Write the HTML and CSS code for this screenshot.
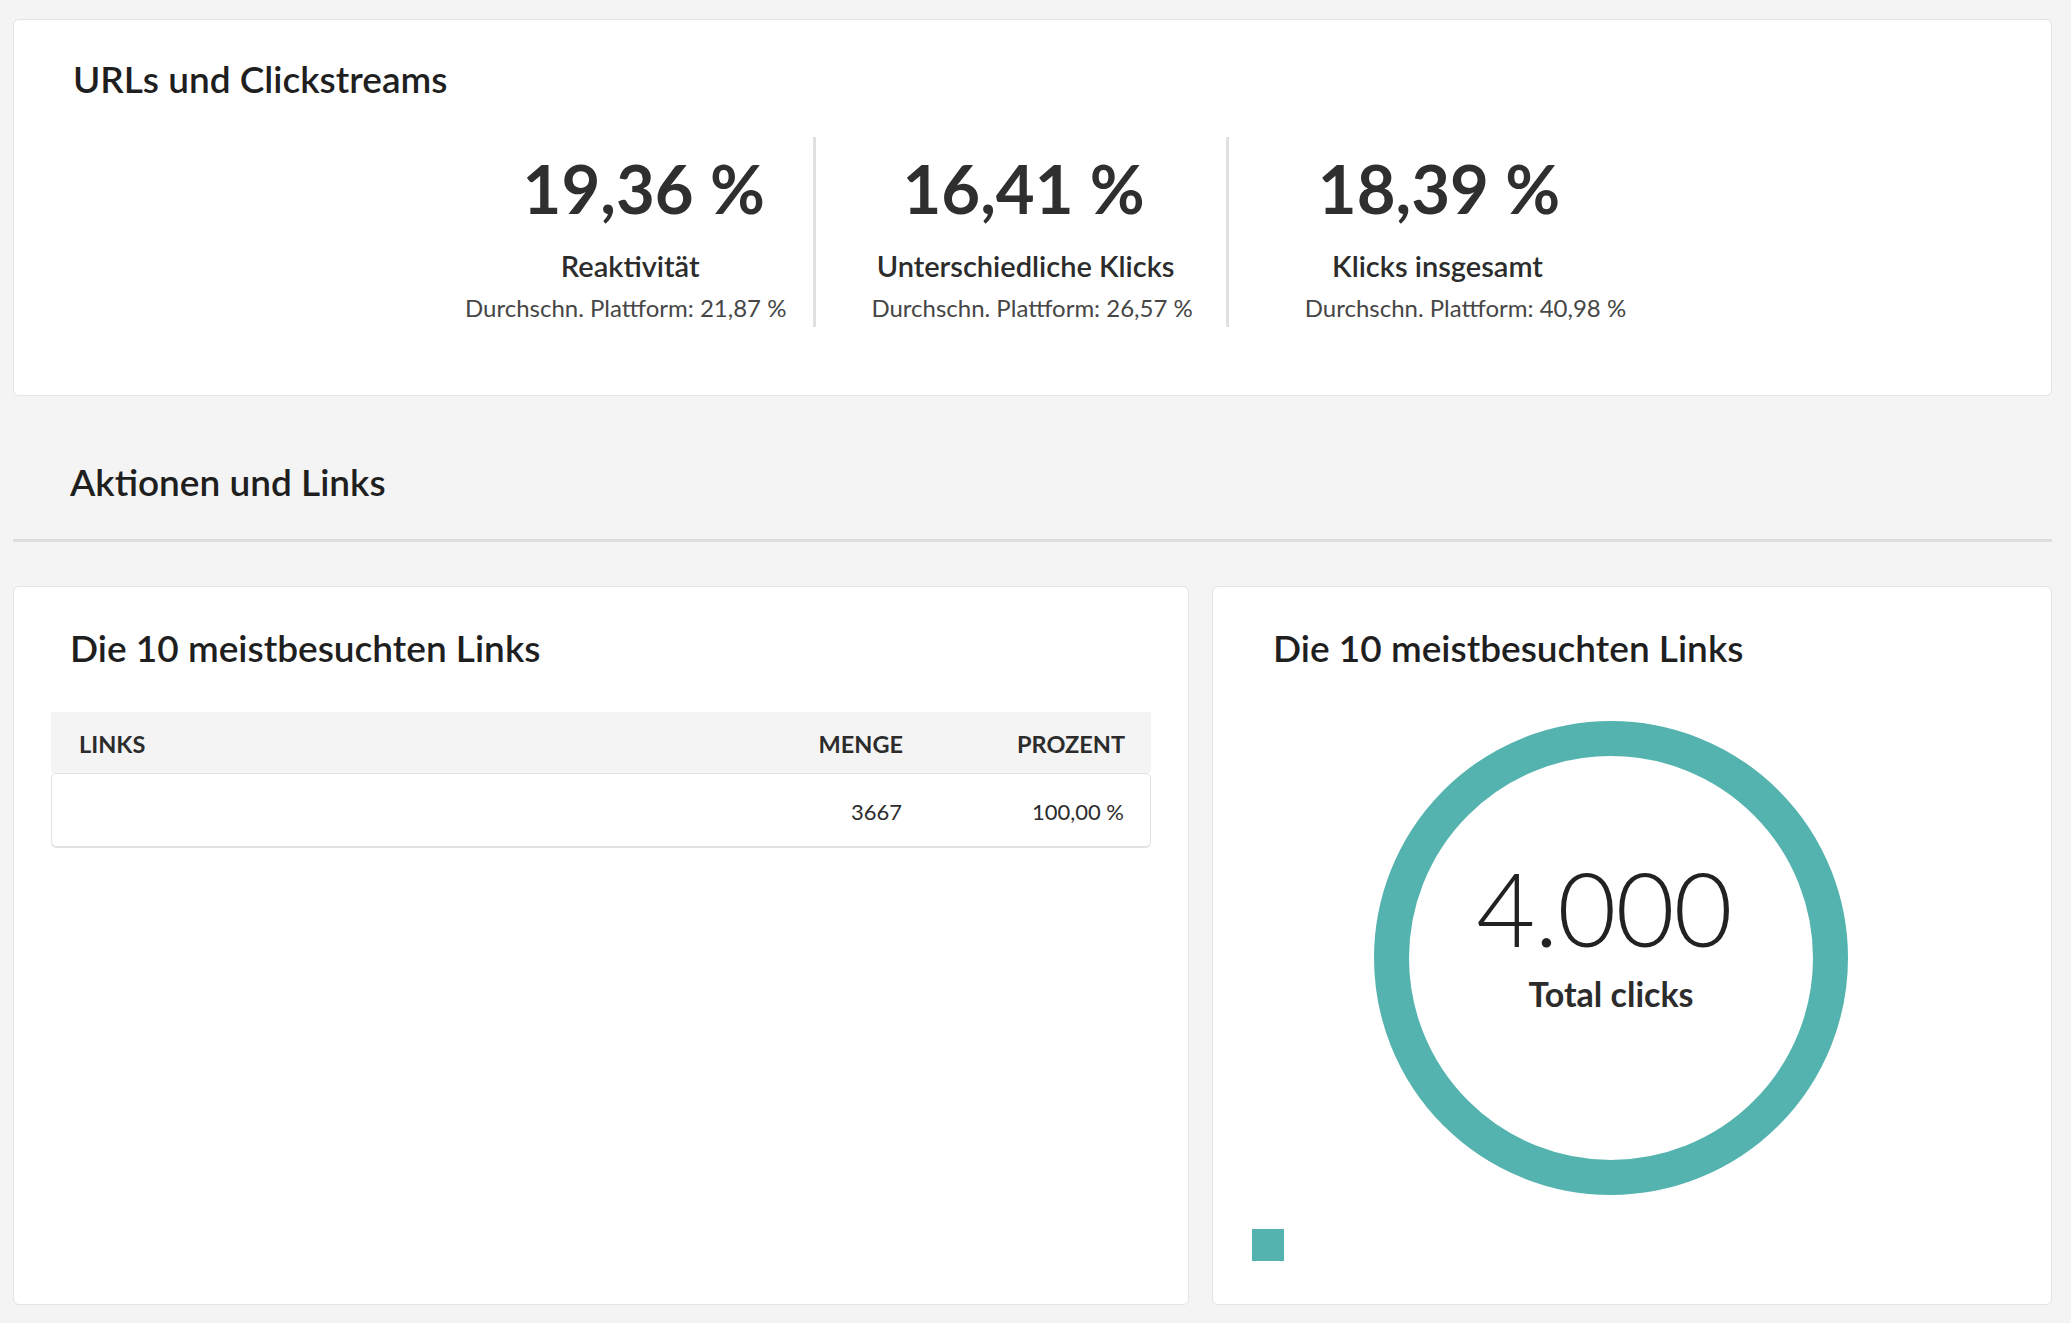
FILE: index.html
```html
<!DOCTYPE html>
<html lang="de">
<head>
<meta charset="utf-8">
<title>URLs und Clickstreams</title>
<link rel="stylesheet" href="styles.css">
</head>
<body>
<div class="page">
  <section class="card card-summary">
    <h2 class="card-title">URLs und Clickstreams</h2>
    <div class="metrics">
      <div class="metric metric-first">
        <div class="metric-value">19,36 %</div>
        <div class="metric-label">Reaktivität</div>
        <div class="metric-avg">Durchschn. Plattform: 21,87 %</div>
      </div>
      <div class="metric metric-middle">
        <div class="metric-value">16,41 %</div>
        <div class="metric-label">Unterschiedliche Klicks</div>
        <div class="metric-avg">Durchschn. Plattform: 26,57 %</div>
      </div>
      <div class="metric metric-last">
        <div class="metric-value">18,39 %</div>
        <div class="metric-label">Klicks insgesamt</div>
        <div class="metric-avg">Durchschn. Plattform: 40,98 %</div>
      </div>
    </div>
  </section>

  <h2 class="section-title">Aktionen und Links</h2>

  <div class="grid">
    <section class="card card-table">
      <h3 class="card-title title-left">Die 10 meistbesuchten Links</h3>
      <div class="table">
        <div class="thead">
          <div class="th">LINKS</div>
          <div class="th num">MENGE</div>
          <div class="th num">PROZENT</div>
        </div>
        <div class="trow">
          <div class="td"></div>
          <div class="td num">3667</div>
          <div class="td num">100,00 %</div>
        </div>
      </div>
    </section>

    <section class="card card-chart">
      <h3 class="card-title title-right">Die 10 meistbesuchten Links</h3>
      <div class="chart">
        <div class="donut">
          <div class="donut-value">4.000</div>
          <div class="donut-label">Total clicks</div>
        </div>
      </div>
      <div class="legend">
        <span class="legend-swatch"></span>
      </div>
    </section>
  </div>
</div>
</body>
</html>
```

FILE: styles.css
```css
* { box-sizing: border-box; }

body {
  margin: 0;
  background: #f4f4f4;
  font-family: Lato, "Noto Sans", sans-serif;
  color: #2c2c2c;
}

.page {
  padding: 19px 19px 18px 13px;
}

.card {
  background: #ffffff;
  border: 1px solid #e3e3e3;
  border-radius: 6px;
}

.card-title {
  margin: 0;
  font-size: 37px;
  line-height: 44px;
  font-weight: 600;
  color: #1f1f1f;
}

/* Summary card */
.card-summary {
  padding: 37px 37px 68px 59px;
}

.metrics {
  display: flex;
  justify-content: flex-start;
  margin-top: 36px;
  margin-left: -22px;
  padding-left: 374px;
}

.metric {
  padding: 11px 27px 4px 40px;
  text-align: center;
}

.metric + .metric {
  border-left: 3px solid #e0e0e0;
}

.metric-middle {
  padding-left: 55px;
  padding-right: 33px;
}

.metric-last {
  padding-left: 76px;
  padding-right: 0;
}

.metric-value {
  font-size: 67px;
  line-height: 80px;
  font-weight: 700;
  color: #2f2f2f;
  margin-bottom: 21px;
}

.metric-label {
  font-size: 29px;
  line-height: 34px;
  font-weight: 600;
  color: #2c2c2c;
  margin-bottom: 10px;
}

.metric-first .metric-value { margin-left: 36px; }
.metric-first .metric-label { margin-left: 9px; }
.metric-middle .metric-value { margin-right: 17px; }
.metric-middle .metric-label { margin-right: 13px; }
.metric-last .metric-value { margin-right: 53px; }
.metric-last .metric-label { margin-right: 56px; }

.metric-avg {
  font-size: 24px;
  line-height: 30px;
  color: #464646;
  white-space: nowrap;
}

/* Section heading */
.section-title {
  margin: 64px 0 0;
  padding: 0 0 35px 57px;
  font-size: 37px;
  line-height: 44px;
  font-weight: 600;
  color: #1f1f1f;
  border-bottom: 3px solid #dedede;
}

/* Lower grid */
.grid {
  display: grid;
  grid-template-columns: 7fr 5fr;
  gap: 23px;
  margin-top: 44px;
}

.card-table {
  padding: 39px 37px 37px;
}

.title-left {
  margin-left: 19px;
}

.table {
  margin-top: 42px;
}

.thead,
.trow {
  display: grid;
  grid-template-columns: 1fr 150px 222px;
  align-items: center;
  padding: 0 26px 0 28px;
}

.thead {
  height: 61px;
  background: #f4f4f4;
  padding-top: 2px;
}

.th {
  font-size: 23.5px;
  font-weight: 700;
  color: #2c2c2c;
}

.trow {
  height: 74px;
  border: 1px solid #e1e1e1;
  border-radius: 5px;
  box-shadow: 0 1px 0 #e1e1e1;
  padding-top: 2px;
}

.td {
  font-size: 22px;
  color: #2c2c2c;
}

.num {
  text-align: right;
}

/* Chart card */
.card-chart {
  padding: 39px 37px 43px;
}

.title-right {
  margin-left: 23px;
}

.chart {
  display: flex;
  justify-content: center;
  padding-right: 42px;
  margin-top: 51px;
}

.donut {
  width: 474px;
  height: 474px;
  border: 35.5px solid #54b3ae;
  border-radius: 50%;
  display: flex;
  flex-direction: column;
  align-items: center;
  padding-top: 100px;
}

.donut-value {
  font-size: 102px;
  line-height: 104px;
  font-weight: 300;
  color: #222222;
  letter-spacing: -1px;
  margin-right: 14px;
}

.donut-label {
  margin-top: 15px;
  font-size: 34px;
  line-height: 38px;
  font-weight: 700;
  color: #2c2c2c;
}

.legend {
  margin-top: 34px;
  margin-left: 2px;
  display: flex;
}

.legend-swatch {
  width: 32px;
  height: 32px;
  background: #54b3ae;
}
```
